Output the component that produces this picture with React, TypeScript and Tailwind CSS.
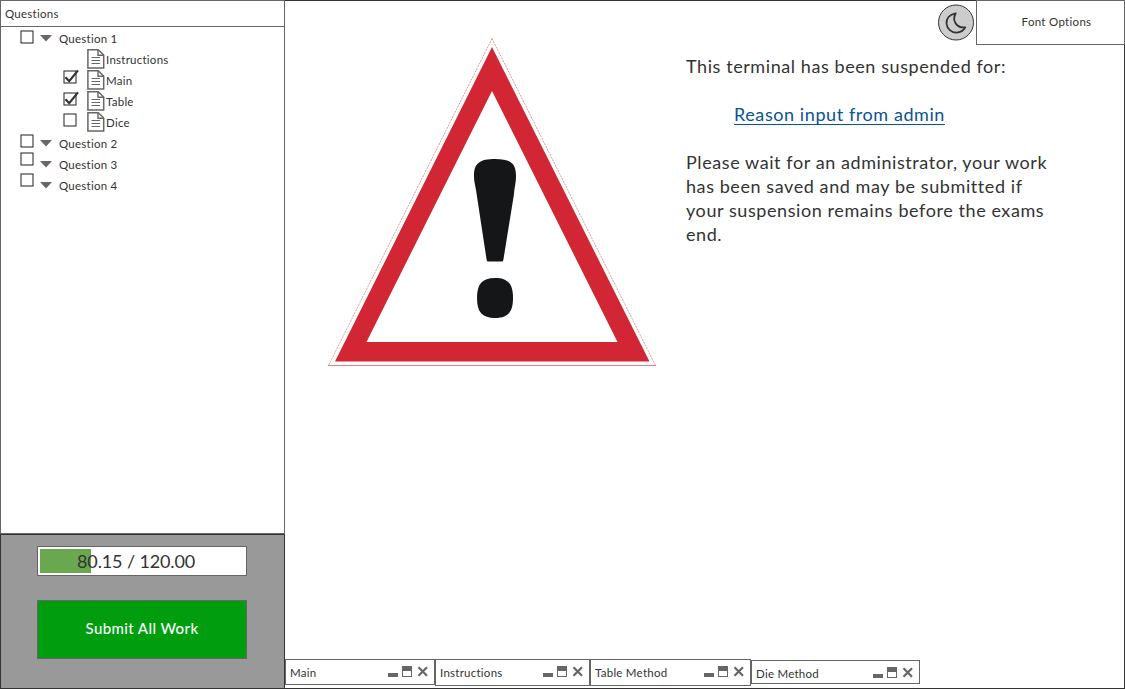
import React from 'react';

const Checkbox = ({ checked = false, className = '' }: { checked?: boolean; className?: string }) => (
  <svg className={`h-[15px] w-[16px] shrink-0 ${className}`} viewBox="0 0 16 15" role="checkbox" aria-checked={checked}>
    <rect x="1" y="2" width="12" height="12" fill="#fff" stroke="#333" strokeWidth="1.1" />
    {checked && <path d="M2.4 8.2 L6.2 12.2 L15 1.4" fill="none" stroke="#333" strokeWidth="2.2" />}
  </svg>
);

const Doc = () => (
  <svg className="h-5 w-[18px] shrink-0" viewBox="0 0 18 20" fill="none" stroke="#666">
    <path d="M0.9 0.8 H11.2 L16.7 6 V19.1 H0.9 Z" fill="#fff" strokeWidth="1.5" />
    <path d="M11 1 V6.2 H16.5" strokeWidth="1.4" />
    <path d="M4.5 8.5 H13 M4.5 11.5 H13 M4.5 14.5 H13" strokeWidth="1.2" />
  </svg>
);

const Question = ({ label, box }: { label: string; box: string }) => (
  <div className="flex h-[21px] items-start pl-[19px]">
    <Checkbox className={box} />
    <svg className="ml-1 mt-[7px] h-[7px] w-3 shrink-0" viewBox="0 0 12 7">
      <path d="M0 0 H12 L6 6.5 Z" fill="#666" />
    </svg>
    <span className="ml-[7px] tracking-[0.25px] leading-[21px]">{label}</span>
  </div>
);

const Item = ({ label, checked, box }: { label: string; checked?: boolean; box?: string }) => (
  <div className="flex h-[21px] items-start pl-[62px]">
    {box ? <Checkbox checked={checked} className={box} /> : <span className="w-4 shrink-0" />}
    <span className="ml-2"><Doc /></span>
    <span className="ml-px tracking-[0.25px] leading-[22px]">{label}</span>
  </div>
);

const Tab = ({ label, className }: { label: string; className: string }) => (
  <div className={`flex shrink-0 justify-between border border-[#666] bg-white pl-1 pr-[6px] ${className}`}>
    <span className="tracking-[0.25px] leading-[26px]">{label}</span>
    <svg className="mt-[6px] h-3 w-10" viewBox="0 0 40 12">
      <rect x="0" y="7" width="10" height="4" fill="#666" />
      <rect x="14.5" y="0.5" width="9" height="10" fill="#fff" stroke="#666" />
      <rect x="14" y="0" width="10" height="5" fill="#666" />
      <path d="M30.5 1.2 L39 9.8 M39 1.2 L30.5 9.8" stroke="#666" strokeWidth="2.2" />
    </svg>
  </div>
);

const WarningSign = () => (
  <svg className="h-[330px] w-[330px] shrink-0" viewBox="327 37 330 330">
    <path d="M492 38.5 L328.5 365.5 H655.5 Z" fill="#fff" stroke="#d9776d" strokeWidth="0.7" strokeDasharray="2 1" />
    <path d="M328 365.5 H656" stroke="#dc8080" />
    <path d="M492 47 L335 361.5 H649.5 Z M492 91 L617.5 342 H366.5 Z" fill="#d22635" fillRule="evenodd" />
    <path d="M474 176 C474 163 480 159 495 159 C510 159 516 163 516 176 C516 183 514.5 187 514 194 L503.5 259 Q503.3 261.5 502 261.5 H488 Q486.7 261.5 486.5 259 L476 190 C475 184 474 181 474 176 Z" fill="#141618" />
    <path d="M477 298 C477 284 482 278 495 278 C508 278 513 284 513 298 C513 312 508 318 495 318 C482 318 477 312 477 298 Z" fill="#141618" />
  </svg>
);

export default function App() {
  return (
    <div className="flex h-[689px] w-[1125px] overflow-hidden bg-white font-['Lato',sans-serif] text-[11.5px] text-[#333]">
      <aside className="flex w-[285px] shrink-0 flex-col">
        <section className="h-[534px] border border-[#666]">
          <h1 className="h-[26px] border-b border-[#666] pl-1 tracking-[0.25px] leading-[26px]">Questions</h1>
          <div className="pt-px">
            <Question label="Question 1" box="mt-px" />
            <Item label="Instructions" />
            <Item label="Main" checked box="-mt-px" />
            <Item label="Table" checked box="mt-0" />
            <Item label="Dice" box="mt-0" />
            <Question label="Question 2" box="mt-0" />
            <Question label="Question 3" box="-mt-[3px]" />
            <Question label="Question 4" box="-mt-[3px]" />
          </div>
        </section>
        <section className="flex h-[155px] flex-col border border-[#333] bg-[#999] px-9 pt-[11px]">
          <div className="grid h-[30px] w-[210px] border border-[#666] bg-white">
            <div className="col-start-1 row-start-1 ml-[2px] mt-[2px] h-6 w-[51px] bg-[#6aa84f]" />
            <span className="col-start-1 row-start-1 pl-[39px] text-[18px] leading-[29px] tracking-[-0.12px]">80.15 / 120.00</span>
          </div>
          <button className="mt-6 h-[59px] w-[210px] border border-[#666] bg-[#009e0f] pb-[3px] text-[15px] font-medium tracking-[0.4px] text-white">Submit All Work</button>
        </section>
      </aside>
      <main className="flex grow flex-col border-y border-r border-[#333]">
        <div className="flex h-[658px]">
          <div className="pl-[42px] pt-9"><WarningSign /></div>
          <div className="grow">
            <header className="flex h-11 justify-end">
              <svg className="mr-px mt-[3px] h-[37px] w-[37px]" viewBox="0 0 37 37">
                <circle cx="18" cy="18.5" r="17.5" fill="#ccc" stroke="#333" />
                <path d="M17.7 9.3 C11 10.5 8.3 15 8.5 19.5 C9 25 13.5 28.8 18.5 28.7 C22.5 28.5 25.5 26.5 27.3 23.3 C19 24.5 13.5 17 17.7 9.3Z" fill="none" stroke="#333" strokeWidth="1.8" strokeLinejoin="round" />
              </svg>
              <button className="-mr-px -mt-px h-[45px] w-[149px] border border-[#666] pb-0.5 pl-3 tracking-[0.3px]">Font Options</button>
            </header>
            <div className="ml-[29px] w-[380px] pt-[9px] text-[18px] leading-6 tracking-[0.58px]">
              <p>This terminal has been suspended for:</p>
              <p className="py-6 pl-12"><a className="text-[#085394] underline underline-offset-[3px]">Reason input from admin</a></p>
              <p>Please wait for an administrator, your work<br />has been saved and may be submitted if<br />your suspension remains before the exams<br />end.</p>
            </div>
          </div>
        </div>
        <nav className="flex items-start">
          <Tab label="Main" className="h-[26px] w-[150px]" />
          <Tab label="Instructions" className="h-[27px] w-[155px]" />
          <Tab label="Table Method" className="h-[27px] w-[161px]" />
          <Tab label="Die Method" className="mt-px h-6 w-[169px]" />
        </nav>
      </main>
    </div>
  );
}
